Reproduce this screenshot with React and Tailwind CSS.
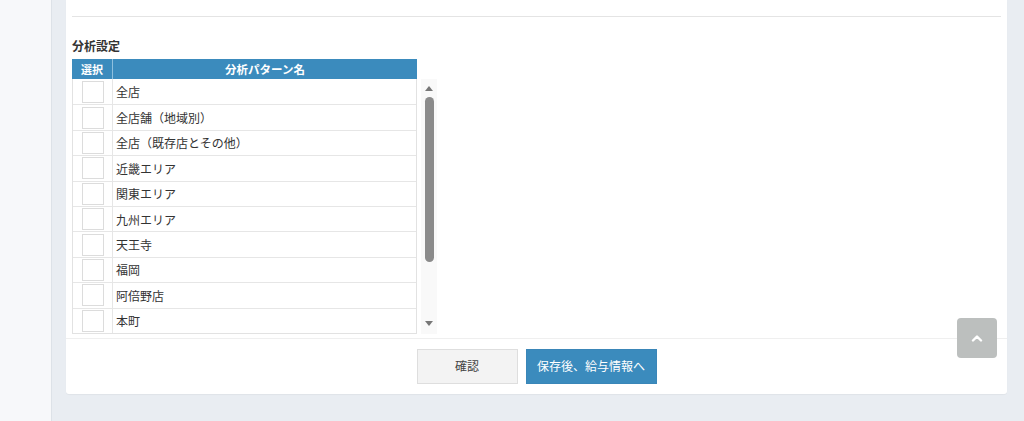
import React from "react";

const rows = [
  "全店",
  "全店舗（地域別）",
  "全店（既存店とその他）",
  "近畿エリア",
  "関東エリア",
  "九州エリア",
  "天王寺",
  "福岡",
  "阿倍野店",
  "本町",
];

export default function App() {
  return (
    <div
      className="relative flex h-[421px] w-full overflow-hidden text-[#333]"
      style={{ fontFamily: '"Noto Sans CJK JP", "Noto Sans", sans-serif' }}
    >
      <div className="w-[52px] shrink-0 border-r border-[#dde2e8] bg-[#f7f8fa]" />
      <div className="flex-1 bg-[#e9edf2] pl-[14px] pr-[17px]">
        <div className="rounded-b-[3px] bg-white shadow-[0_1px_1px_rgba(0,0,0,0.04)]">
          <div className="px-[6px]">
            <div className="h-[17px] border-b border-[#e4e4e4]" />
            <div className="pt-[21px] text-[12px] font-bold leading-[16px]">分析設定</div>
            <div className="mt-[5px] flex">
              <div className="w-[345px]">
                <div className="flex h-[20px] bg-[#3b8bbd] text-[11.5px] font-bold leading-[20px] text-white">
                  <div className="w-[41px] border-r border-[#8fc0de] text-center text-[11px]">選択</div>
                  <div className="flex-1 text-center">分析パターン名</div>
                </div>
                <div className="border-x border-b border-[#e2e2e2]">
                  {rows.map((r, i) => (
                    <div
                      key={r}
                      className={`flex h-[25.4px] items-center ${i > 0 ? "border-t border-[#e6e6e6]" : ""}`}
                    >
                      <div className="flex h-full w-[40px] items-center justify-center border-r border-[#e6e6e6]">
                        <div className="h-[22px] w-[22px] border border-[#dcdcdc] bg-white" />
                      </div>
                      <div className="pl-[3px] pt-[1px] text-[12px]">{r}</div>
                    </div>
                  ))}
                </div>
              </div>
              <div className="ml-[4px] mt-[20px] flex w-[16px] flex-col items-center bg-[#f9f9f9] py-[5px]">
                <svg width="8" height="5" viewBox="0 0 8 5" className="mt-[2px]">
                  <path d="M4 0L8 5H0Z" fill="#777" />
                </svg>
                <div className="mt-[6px] h-[165px] w-[9px] rounded-[5px] bg-[#8b8b8b]" />
                <div className="flex-1" />
                <svg width="8" height="5" viewBox="0 0 8 5" className="mb-[3px]">
                  <path d="M0 0H8L4 5Z" fill="#777" />
                </svg>
              </div>
            </div>
          </div>
          <div className="mt-[4px] border-t border-[#efefef]" />
          <div className="flex justify-center gap-[8px] pb-[10px] pt-[10px] text-[12px]">
            <button className="h-[35px] w-[101px] border border-[#dedede] bg-[#f3f3f3] text-[#444]">
              確認
            </button>
            <button className="h-[35px] w-[131px] border border-[#3a86b8] bg-[#3b8bbd] text-white">
              保存後、給与情報へ
            </button>
          </div>
        </div>
      </div>
      <div className="absolute left-[957px] top-[318px] flex h-[40px] w-[40px] items-center justify-center rounded-[4px] bg-[#bcbfbe]">
        <svg width="12" height="8" viewBox="0 0 12 8">
          <path d="M2 6.5L6 2.5L10 6.5" stroke="white" strokeWidth="2.4" fill="none" strokeLinecap="round" strokeLinejoin="round" />
        </svg>
      </div>
    </div>
  );
}
